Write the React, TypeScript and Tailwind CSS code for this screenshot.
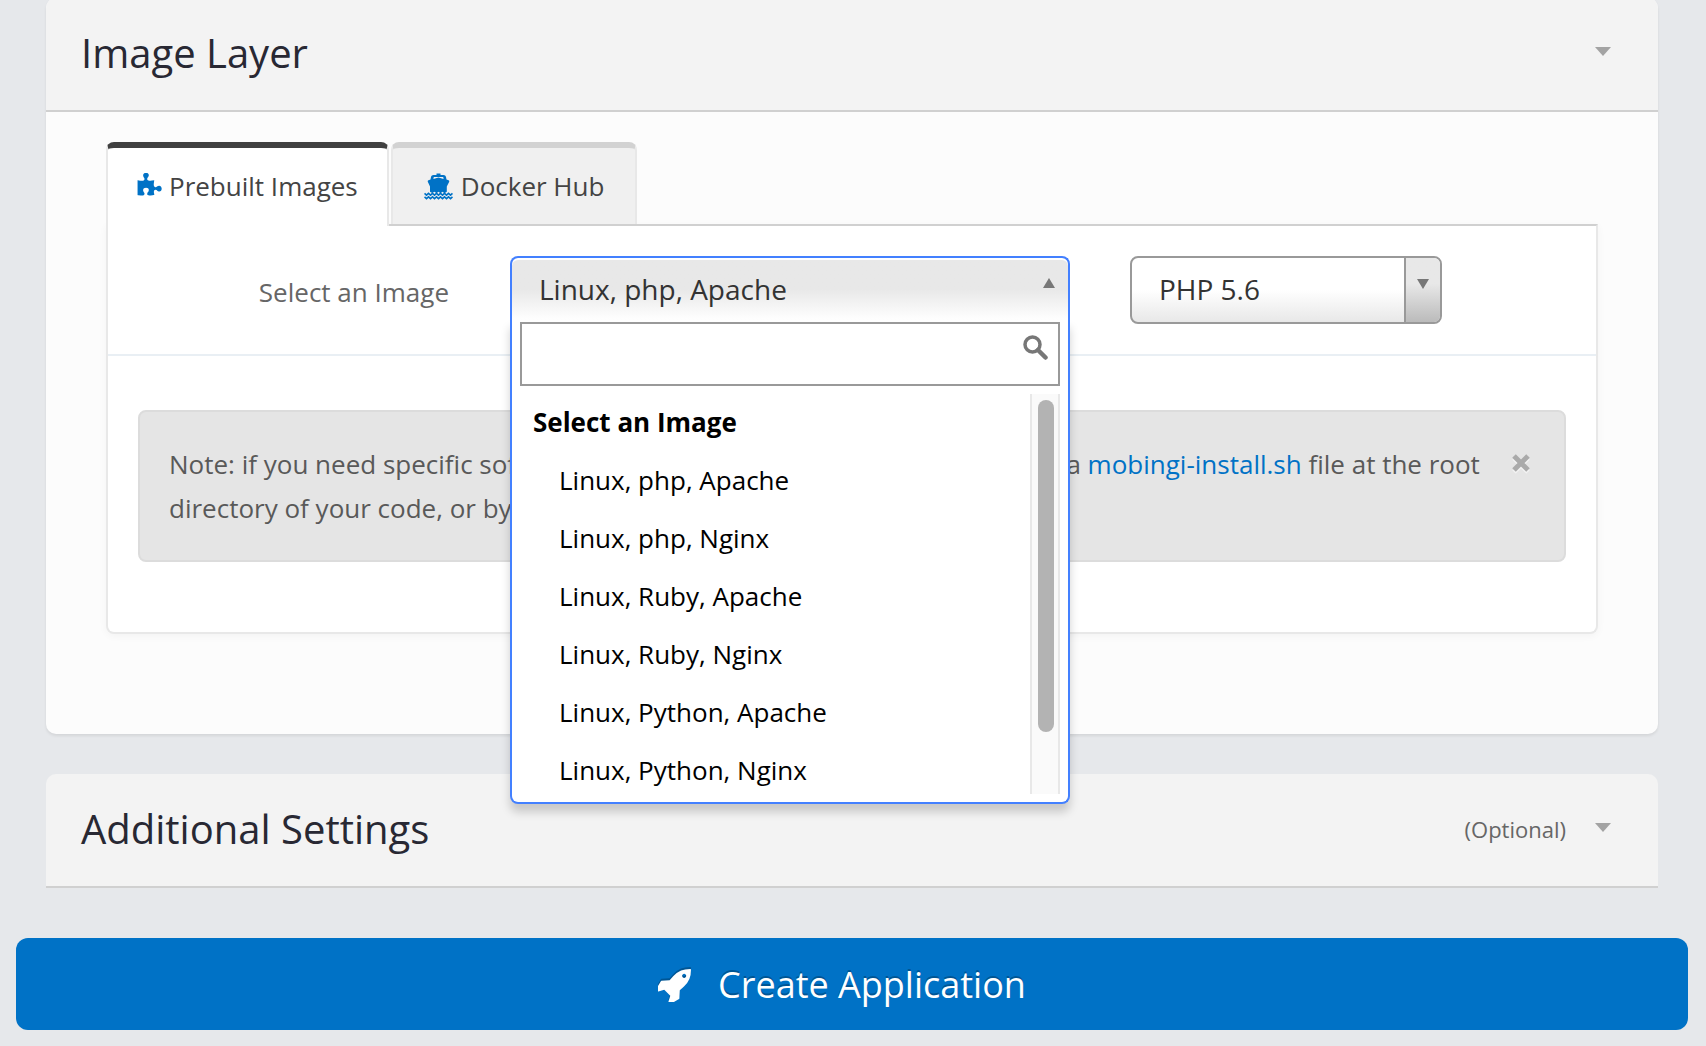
import React, { useState } from "react";

const images = [
  "Linux, php, Apache",
  "Linux, php, Nginx",
  "Linux, Ruby, Apache",
  "Linux, Ruby, Nginx",
  "Linux, Python, Apache",
  "Linux, Python, Nginx",
];

function PuzzleIcon() {
  return (
    <svg viewBox="64 0 1700 1792" className="h-[26px] w-[25px] fill-[#0072c6]" aria-hidden="true">
      <path d="M1755 1083q0 81-44.5 135t-123.5 54q-41 0-77.5-17.5t-59-38-56.5-38-71-17.5q-110 0-110 124 0 39 16 115t15 115v5q-22 0-33 1-34 3-97.5 11.5t-115.5 13.5-98 5q-61 0-103-26.5t-42-83.5q0-37 17.5-71t38-56.5 38-59 17.5-77.5q0-79-54-123.5t-135-44.5q-84 0-143 45.5t-59 127.5q0 43 15 83t33.5 64.5 33.5 53 15 50.5q0 45-46 89-37 35-117 35-95 0-245-24-9-2-27.5-4t-27.5-4l-13-2q-1 0-3-1-2 0-2-1v-1024q2 1 17.5 3.5t34 5 21.5 3.5q150 24 245 24 80 0 117-35 46-44 46-89 0-22-15-50.5t-33.5-53-33.5-64.5-15-83q0-82 59-127.5t144-45.5q80 0 134 44.5t54 123.5q0 41-17.5 77.5t-38 59-38 56.5-17.5 71q0 57 42 83.5t103 26.5q64 0 180-15t163-17v2q-1 2-3.5 17.5t-5 34-3.5 21.5q-24 150-24 245 0 80 35 117 44 46 89 46 22 0 50.5-15t53-33.5 64.5-33.5 83-15q82 0 127.5 59t45.5 143z" />
    </svg>
  );
}

function ShipIcon() {
  return (
    <svg viewBox="0 0 29 27" className="h-[27px] w-[29px]" aria-hidden="true">
      <path
        fill="#0072c6"
        fillRule="evenodd"
        d="M12.500 0.500h4v1.400h3c1.200 0 2.300.9 2.500 2.100l.5 2.500 2 .8c.8.3 1 .9.6 1.600l-2.300 4.600v5.300l-2.300 1.400-2-1.500-2 1.500-2-1.500-2 1.500-2-1.500-2.300 1.200-2.200-1.100v-5.300L3.900 8.900c-.4-.7-.2-1.300.6-1.600l2-.8L7 4c.2-1.200 1.300-2.100 2.500-2.100h3zM9.800 4l-.4 2 5.100-1.600 5.100 1.600-.4-2z"
      />
      <path
        fill="none"
        stroke="#0072c6"
        strokeWidth="1.700"
        d="M.5 20.400l2 1.700 2-1.700 2 1.700 2-1.700 2 1.700 2-1.700 2 1.700 2-1.700 2 1.700 2-1.700 2 1.700 2-1.700 2 1.700 2-1.700M.5 23.900l2 1.700 2-1.700 2 1.700 2-1.700 2 1.700 2-1.700 2 1.700 2-1.700 2 1.700 2-1.700 2 1.700 2-1.700 2 1.700 2-1.700"
      />
    </svg>
  );
}

function RocketIcon() {
  return (
    <svg viewBox="120 128 1544 1544" className="h-[33px] w-[33px] fill-white drop-shadow-[0_-2px_0_rgba(0,0,0,0.25)]" aria-hidden="true">
      <path d="M1440 448q0-40-28-68t-68-28-68 28-28 68 28 68 68 28 68-28 28-68zm224-288q0 249-75.5 430.5t-253.5 360.5q-81 80-195 176l-20 379q-2 16-16 26l-384 224q-7 4-16 4-12 0-23-9l-64-64q-13-14-8-32l85-276-281-281-276 85q-3 1-9 1-14 0-23-9l-64-64q-17-19-5-39l224-384q10-14 26-16l379-20q96-114 176-195 188-187 358-258t431-71q14 0 24 9.500t10 22.500z" />
    </svg>
  );
}

function Caret() {
  return (
    <svg viewBox="0 0 16 9" className="h-[9px] w-4 fill-[#a3a3a3]" aria-hidden="true">
      <path d="M0 0h16L8 9z" />
    </svg>
  );
}

function CardHeader({ title, note }: { title: string; note?: string }) {
  return (
    <header className="flex items-center justify-between rounded-t-[10px] border-b-2 border-[#d0d0d0] bg-[#f3f3f3] pt-[35px] pr-[47px] pb-[37px] pl-[35px]">
      <h2 className="text-[40px] leading-[40px] text-[#282833]">{title}</h2>
      <div className="flex items-center gap-[29px]">
        {note && <span className="text-[22px] leading-[30px] text-[#666]">{note}</span>}
        <button type="button" aria-label={`Toggle ${title}`} className="pb-[3px]">
          <Caret />
        </button>
      </div>
    </header>
  );
}

function ImagePicker() {
  const [selected, setSelected] = useState(images[0]);
  return (
    <div className="relative h-[68px]">
      <button
        id="image"
        type="button"
        aria-haspopup="listbox"
        aria-expanded="true"
        className="flex h-16 w-full items-center justify-between rounded-t-lg border-2 border-b-0 border-[#4380ff] bg-linear-to-b from-[#e8e8e8] from-50% to-white pr-[13px] pb-px pl-[27px] text-[28px] leading-[36px] text-[#333] shadow-[inset_0_2px_0_#fff]"
      >
        {selected}
        <svg viewBox="0 0 12 10" className="mb-3 h-[10px] w-3 fill-[#777]" aria-hidden="true">
          <path d="M0 10h12L6 0z" />
        </svg>
      </button>
      <div className="absolute inset-x-0 top-16 z-10 rounded-b-lg border-2 border-t-0 border-[#4380ff] bg-white px-2 pt-[2px] pb-2 shadow-[0_8px_10px_rgba(0,0,0,0.18)]">
        <div className="relative">
          <input
            type="text"
            aria-label="Search images"
            className="block h-16 w-full border-2 border-[#999] bg-white pr-12 pl-3 text-[26px] outline-none"
          />
          <svg viewBox="0 0 25 25" className="absolute top-[13px] right-3 h-[25px] w-[25px]" aria-hidden="true">
            <circle cx="9.500" cy="9.500" r="7.500" fill="none" stroke="#777" strokeWidth="3.500" />
            <path d="M15 15l7.500 7.500" stroke="#777" strokeWidth="4.500" strokeLinecap="round" />
          </svg>
        </div>
        <div className="mt-2 flex h-[400px] overflow-hidden">
          <div className="flex-1 text-[26px] leading-[30px] text-black">
            <div className="pt-[13px] pb-[14px] pl-[13px] font-bold">Select an Image</div>
            <ul role="listbox" aria-label="Images">
              {images.map((name) => (
                <li
                  key={name}
                  role="option"
                  aria-selected={name === selected}
                  onClick={() => setSelected(name)}
                  className="py-[14px] pl-[39px]"
                >
                  {name}
                </li>
              ))}
            </ul>
          </div>
          <div className="w-[30px] border-x-2 border-[#e8e8e8] bg-[#fafafa] pt-[6px] pl-[6px]">
            <div className="h-[332px] w-4 rounded-full bg-[#b3b3b3]" />
          </div>
        </div>
      </div>
    </div>
  );
}

function VersionSelect() {
  return (
    <div className="relative">
      <select
        aria-label="Version"
        className="block h-[68px] w-full appearance-none rounded-lg border-2 border-[#999] bg-linear-to-b from-white from-50% to-[#e8e8e8] pr-10 pb-[2px] pl-[27px] text-[28px] leading-[36px] text-[#333]"
      >
        <option>PHP 5.6</option>
      </select>
      <span className="pointer-events-none absolute inset-y-[2px] right-[2px] flex w-9 justify-center rounded-r-md border-l-2 border-[#999] bg-linear-to-b from-[#e8e8e8] from-40% to-[#bbb] pt-[21px]">
        <svg viewBox="0 0 12 10" className="h-[10px] w-3 fill-[#777]" aria-hidden="true">
          <path d="M0 0h12L6 10z" />
        </svg>
      </span>
    </div>
  );
}

export default function App() {
  return (
    <div className="min-h-screen overflow-hidden bg-[#e6e8eb] pr-[18px] pb-4 pl-4 font-['Open_Sans',sans-serif]">
      <section className="mx-[30px] -mt-[2px] rounded-[10px] bg-[#fcfcfc] shadow-[0_2px_3px_rgba(0,0,0,0.08)]">
        <CardHeader title="Image Layer" />
        <div className="px-[60px] pt-[30px] pb-[100px]">
          <div role="tablist" className="flex gap-[2px] text-[26px] leading-[36px] text-[#444]">
            <button
              role="tab"
              aria-selected="true"
              type="button"
              className="relative -mb-[2px] flex items-center gap-[7px] rounded-t-lg border-2 border-t-6 border-b-0 border-[#e8e8e8] border-t-[#404040] bg-white px-[29px] pt-5 pb-[22px]"
            >
              <PuzzleIcon />
              Prebuilt Images
            </button>
            <button
              role="tab"
              aria-selected="false"
              type="button"
              className="flex items-center gap-2 rounded-t-lg border-2 border-t-6 border-b-0 border-[#e8e8e8] border-t-[#d2d2d2] bg-[#f0f0f0] px-[31px] py-5"
            >
              <ShipIcon />
              Docker Hub
            </button>
          </div>
          <div
            role="tabpanel"
            className="rounded-b-lg border-2 border-[#e8e8e8] border-t-[#d0d0d0] bg-white pb-[70px] shadow-[0_2px_8px_rgba(0,0,0,0.04)]"
          >
            <div className="grid grid-cols-12 items-center border-b-2 border-[#e9eff4] py-[30px]">
              <label htmlFor="image" className="col-span-3 pt-1 pr-[31px] pl-[30px] text-right text-[26px] leading-[36px] text-[#666]">
                Select an Image
              </label>
              <div className="col-span-5 px-[30px]">
                <ImagePicker />
              </div>
              <div className="col-span-3 px-[30px]">
                <VersionSelect />
              </div>
            </div>
            <div className="mx-[30px] mt-[54px] flex items-start justify-between rounded-lg border-2 border-[#dcdcdc] bg-[#e5e5e5] py-[30px] pr-[33px] pl-[29px] text-[26px] leading-[44px] text-[#595959]">
              <p>
                Note: if you need specific software to be installed you can do so by having a{" "}
                <a href="#install" className="text-[#0072c6]">
                  mobingi-install.sh
                </a>{" "}
                file at the root
                <br />
                directory of your code, or by contacting us.
              </p>
              <button type="button" aria-label="Dismiss note" className="mt-[11px]">
                <svg viewBox="0 0 20 20" className="size-5 drop-shadow-[0_2px_0_#f2f2f2]" aria-hidden="true">
                  <path d="M3 3l14 14M17 3L3 17" stroke="#aaa" strokeWidth="5" />
                </svg>
              </button>
            </div>
          </div>
        </div>
      </section>

      <section className="mx-[30px] mt-10">
        <CardHeader title="Additional Settings" note="(Optional)" />
      </section>

      <button
        type="button"
        className="mt-[50px] flex w-full items-center justify-center gap-[27px] rounded-xl bg-[#0072c6] pt-[29px] pr-5 pb-[27px] text-[36px] leading-[36px] text-white text-shadow-[0_-2px_0_rgba(0,0,0,0.25)]"
      >
        <RocketIcon />
        Create Application
      </button>
    </div>
  );
}
